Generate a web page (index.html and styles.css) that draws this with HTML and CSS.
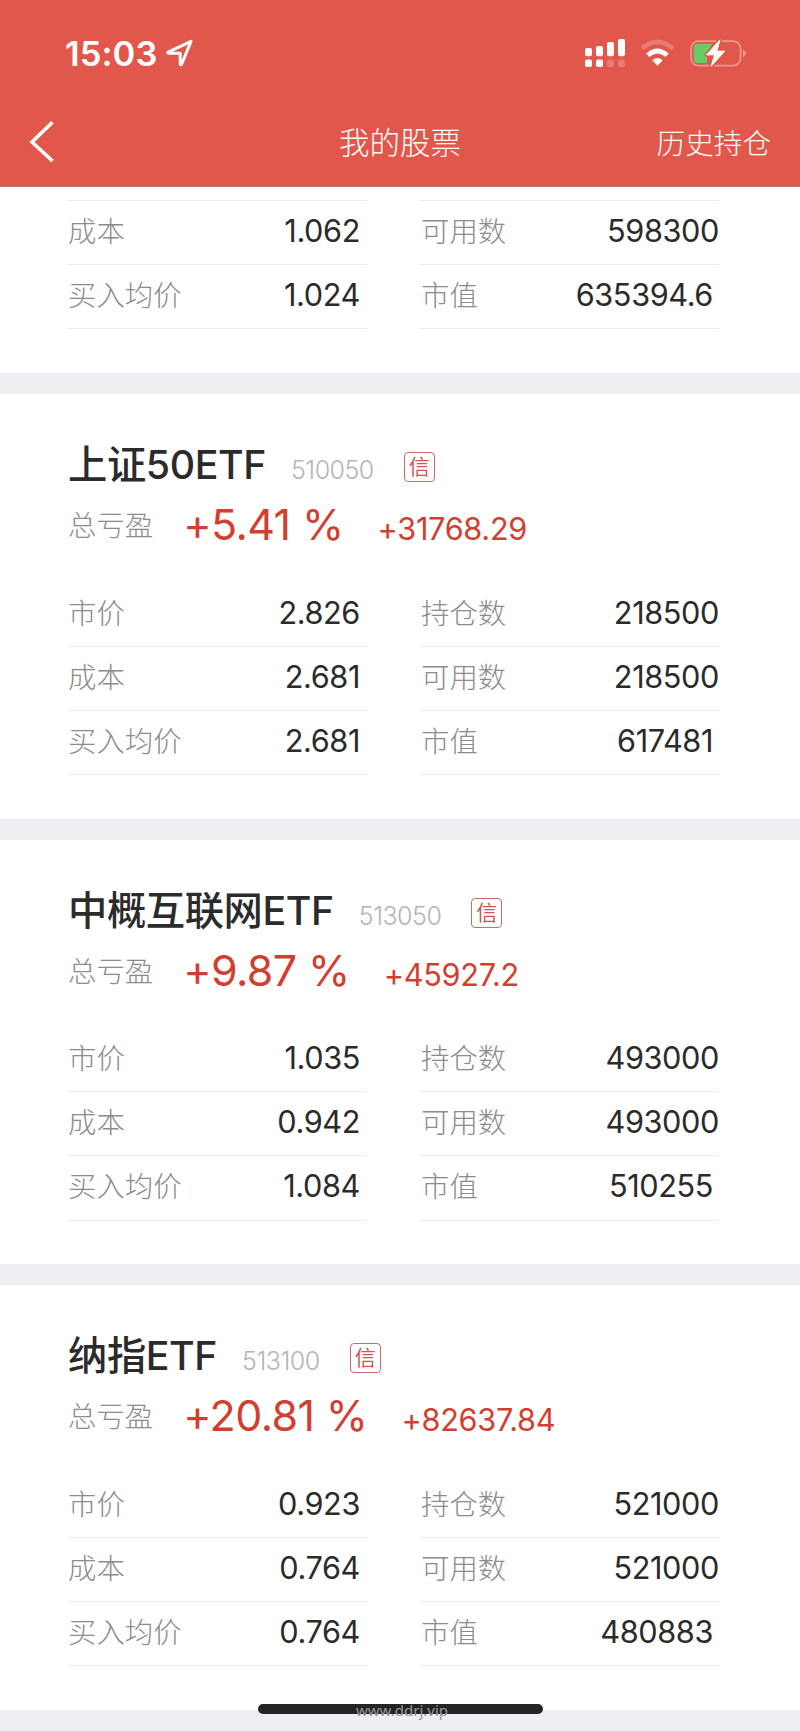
FILE: index.html
```
<!DOCTYPE html>
<html lang="zh-CN">
<head>
<meta charset="utf-8">
<title>我的股票</title>
<link rel="stylesheet" href="styles.css">
</head>

<body>
<header>
	<div class="status">
		<span class="time">15:03</span>
		<svg class="locate" width="28" height="28" viewBox="0 0 28 28"><path d="M2.2 13.2L25 2.4L15.6 25.2Q14.8 26.6 14.2 25V14.2H2.8Q1 13.8 2.2 13.2Z" fill="none" stroke="#fff" stroke-width="3" stroke-linejoin="round"/></svg>
		<svg class="signals" width="162" height="30" viewBox="0 0 162 30">
			<g fill="#fff">
				<rect x="0" y="9" width="7" height="8.3" rx="2"/>
				<rect x="11" y="7" width="7" height="10.3" rx="2"/>
				<rect x="22" y="3" width="7" height="14.3" rx="2"/>
				<rect x="33" y="0" width="7" height="17.3" rx="2"/>
				<rect x="0" y="20.5" width="7" height="7.5" rx="2"/>
				<rect x="11" y="20.5" width="7" height="7.5" rx="2"/>
				<rect x="22" y="20.5" width="7" height="7.5" rx="2" opacity=".22"/>
				<rect x="33" y="20.5" width="7" height="7.5" rx="2" opacity=".22"/>
			</g>
			<!-- wifi -->
			<path d="M57 9.6Q72.5 -3.6 88 9.6" fill="none" stroke="#fff" stroke-opacity=".22" stroke-width="4.6"/>
			<path d="M62.8 16.2Q72.5 7.8 82.2 16.2" fill="none" stroke="#fff" stroke-width="4.6"/>
			<path d="M67.3 21.2Q72.5 16.8 77.7 21.2L72.5 26.8Z" fill="#fff"/>
			<!-- battery -->
			<rect x="106" y="2.1" width="49.6" height="24.6" rx="7.5" fill="none" stroke="#fff" stroke-opacity=".38" stroke-width="1.8"/>
			<path d="M158 10.5Q161 12 161 14.3Q161 16.8 158 18.2Z" fill="#fff" fill-opacity=".4"/>
			<path d="M113 4.8H127L122 14V24H113Q108.7 24 108.7 19.7V9.1Q108.7 4.8 113 4.8Z" fill="#67ce67"/>
			<path d="M135 .8L121.5 15.8H129.6L126.2 27.2L139.6 12.2H131.8Z" fill="#fff" stroke="#e1574c" stroke-width="4" stroke-linejoin="round"/>
			<path d="M135 .8L121.5 15.8H129.6L126.2 27.2L139.6 12.2H131.8Z" fill="#fff" stroke="#fff" stroke-width="1" stroke-linejoin="round"/>
		</svg>
	</div>
	<nav>
		<svg class="back" width="26" height="44" viewBox="0 0 26 44"><path d="M23.5 2.2L3 22L23.5 41" fill="none" stroke="#fff" stroke-width="3.6"/></svg>
		<h1>我的股票</h1>
		<a class="history">历史持仓</a>
	</nav>
</header>

<section class="card first">
	<div class="grid">
		<ul>
			<li><label>成本</label><span>1.062</span></li>
			<li><label>买入均价</label><span>1.024</span></li>
		</ul>
		<ul class="amount">
			<li><label>可用数</label><span>598300</span></li>
			<li><label>市值</label><span>635394.6</span></li>
		</ul>
	</div>
</section>

<section class="card">
	<div class="name"><h2>上证50ETF</h2><span class="code">510050</span><i class="tag">信</i></div>
	<div class="profit"><label>总亏盈</label><b>+5.41 %</b><span>+31768.29</span></div>
	<div class="grid">
		<ul>
			<li><label>市价</label><span>2.826</span></li>
			<li><label>成本</label><span>2.681</span></li>
			<li><label>买入均价</label><span>2.681</span></li>
		</ul>
		<ul class="amount">
			<li><label>持仓数</label><span>218500</span></li>
			<li><label>可用数</label><span>218500</span></li>
			<li><label>市值</label><span>617481</span></li>
		</ul>
	</div>
</section>

<section class="card">
	<div class="name"><h2>中概互联网ETF</h2><span class="code">513050</span><i class="tag">信</i></div>
	<div class="profit"><label>总亏盈</label><b>+9.87 %</b><span>+45927.2</span></div>
	<div class="grid">
		<ul>
			<li><label>市价</label><span>1.035</span></li>
			<li><label>成本</label><span>0.942</span></li>
			<li><label>买入均价</label><span>1.084</span></li>
		</ul>
		<ul class="amount">
			<li><label>持仓数</label><span>493000</span></li>
			<li><label>可用数</label><span>493000</span></li>
			<li><label>市值</label><span>510255</span></li>
		</ul>
	</div>
</section>

<section class="card">
	<div class="name"><h2>纳指ETF</h2><span class="code">513100</span><i class="tag">信</i></div>
	<div class="profit"><label>总亏盈</label><b>+20.81 %</b><span>+82637.84</span></div>
	<div class="grid">
		<ul>
			<li><label>市价</label><span>0.923</span></li>
			<li><label>成本</label><span>0.764</span></li>
			<li><label>买入均价</label><span>0.764</span></li>
		</ul>
		<ul class="amount">
			<li><label>持仓数</label><span>521000</span></li>
			<li><label>可用数</label><span>521000</span></li>
			<li><label>市值</label><span>480883</span></li>
		</ul>
	</div>
</section>

<div class="home"><span>www.ddrj.vip</span></div>
</body>
</html>
```
FILE: styles.css
```
* {
    box-sizing: border-box;
    margin: 0;
    padding: 0;
}
body {
    position: relative;
    width: 800px;
    height: 1731px;
    overflow: hidden;
    background: #eeeef3;
    color: #2b2b2b;
    font-family: Inter, "Noto Sans CJK SC", sans-serif;
}
svg {
    display: block;
}
ul {
    list-style: none;
}

/* header */
header {
    height: 187px;
    background: #e1574c;
    border-bottom: 1px solid #c0766e;
    color: #fff;
}
.status {
    display: flex;
    height: 100px;
    padding: 39px 53px 0 65px;
}
.time {
    width: 92px;
    font-size: 34.5px;
    line-height: 30px;
    font-weight: 600;
    letter-spacing: 0.1px;
}
.locate {
    margin-left: 9px;
}
.signals {
    margin-left: auto;
}
nav {
    display: grid;
    grid-template-columns: 200px 1fr 200px;
    align-items: center;
    height: 84px;
    padding: 0 29px;
}
nav h1 {
    padding-bottom: 2px;
    font-size: 30.5px;
    font-weight: 300;
    text-align: center;
}
.history {
    padding-bottom: 2px;
    font-size: 28.6px;
    font-weight: 300;
    text-align: right;
}

/* cards */
.card {
    height: 424.7px;
    margin-bottom: 21px;
    padding: 44px 82px 0 68px;
    background: #fff;
}
.first {
    height: 186px;
    padding-top: 13px;
}
.first ul {
    border-top: 1px solid #ececec;
}
.name {
    display: flex;
    align-items: baseline;
    height: 56px;
    line-height: 54px;
}
.name h2 {
    font-size: 39.3px;
    font-weight: 500;
    letter-spacing: -0.4px;
}
.code {
    margin-left: 25px;
    color: #b5b5b5;
    font-size: 25px;
    font-weight: 300;
    letter-spacing: -0.5px;
}
.tag {
    align-self: flex-start;
    width: 31px;
    height: 30px;
    margin: 14px 0 0 30px;
    border: 1px solid #d06a66;
    border-radius: 4px;
    color: #cf5550;
    font-size: 21px;
    font-style: normal;
    line-height: 28px;
    text-align: center;
}
.profit {
    display: flex;
    align-items: baseline;
    height: 88.5px;
    line-height: 60px;
    color: #d23f31;
}
label {
    color: #8c8c8c;
    font-size: 28.4px;
    font-weight: 300;
}
.profit label {
    align-self: flex-start;
    line-height: 64px;
}
.profit b {
    margin-left: 30px;
    font-size: 43px;
    font-weight: 400;
    letter-spacing: -0.6px;
}
.profit span {
    margin-left: 34px;
    font-size: 30.7px;
    letter-spacing: -0.3px;
}
.grid {
    display: grid;
    grid-template-columns: 299px 299px;
    column-gap: 53px;
}
.grid li {
    display: flex;
    justify-content: space-between;
    height: 64.15px;
    padding: 0 7px 0 0;
    border-bottom: 1px solid #ececec;
    line-height: 61px;
}
.grid span {
    font-size: 30.7px;
    line-height: 59px;
    letter-spacing: -0.4px;
}
.grid .amount li {
    padding: 0 0 0 1px;
}
.grid .amount li:last-child {
    padding-right: 6px;
}

/* home indicator */
.home {
    position: absolute;
    left: 258px;
    top: 1704px;
    width: 285px;
    height: 10px;
    border-radius: 5px;
    background: #242424;
}
.home span {
    display: block;
    margin-left: 3px;
    color: #999;
    font: 15px/13px "Noto Sans", sans-serif;
    text-align: center;
}
```
